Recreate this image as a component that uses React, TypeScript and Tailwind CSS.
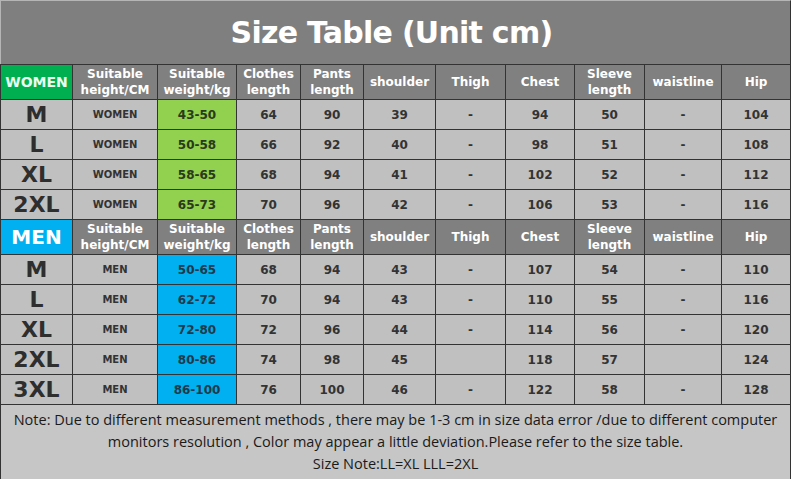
import React from "react";

const widths = [72, 85, 79, 64, 63, 72, 70, 69, 70, 77, 69];

const headers = [
  ["Suitable", "height/CM"],
  ["Suitable", "weight/kg"],
  ["Clothes", "length"],
  ["Pants", "length"],
  ["shoulder"],
  ["Thigh"],
  ["Chest"],
  ["Sleeve", "length"],
  ["waistline"],
  ["Hip"],
];

const women = [
  { size: "M", w: "43-50", v: ["64", "90", "39", "-", "94", "50", "-", "104"] },
  { size: "L", w: "50-58", v: ["66", "92", "40", "-", "98", "51", "-", "108"] },
  { size: "XL", w: "58-65", v: ["68", "94", "41", "-", "102", "52", "-", "112"] },
  { size: "2XL", w: "65-73", v: ["70", "96", "42", "-", "106", "53", "-", "116"] },
];

const men = [
  { size: "M", w: "50-65", v: ["68", "94", "43", "-", "107", "54", "-", "110"] },
  { size: "L", w: "62-72", v: ["70", "94", "43", "-", "110", "55", "-", "116"] },
  { size: "XL", w: "72-80", v: ["72", "96", "44", "-", "114", "56", "-", "120"] },
  { size: "2XL", w: "80-86", v: ["74", "98", "45", "", "118", "57", "", "124"] },
  { size: "3XL", w: "86-100", v: ["76", "100", "46", "-", "122", "58", "-", "128"] },
];

function HeaderRow({ label, color }: { label: string; color: "women" | "men" }) {
  return (
    <tr className="h-[35px]">
      <td
        className={
          color === "women"
            ? "border border-[#333] bg-[#00b050] text-center text-[14px] font-bold text-[#eafff0]"
            : "border border-[#333] bg-[#00b0f0] text-center text-[20px] font-bold text-white"
        }
      >
        {label}
      </td>
      {headers.map((h, i) => (
        <td
          key={i}
          className="border border-[#333] bg-[#808080] text-center text-[12px] font-bold leading-[16px] text-white"
        >
          {h.map((line, j) => (
            <div key={j}>{line}</div>
          ))}
        </td>
      ))}
    </tr>
  );
}

function DataRow({
  row,
  who,
}: {
  row: { size: string; w: string; v: string[] };
  who: "women" | "men";
}) {
  return (
    <tr className="h-[30px]">
      <td className="border border-[#333] bg-[#c0c0c0] text-center text-[22px] font-bold leading-none text-[#2e2e2e]">
        {row.size}
      </td>
      <td className="border border-[#333] bg-[#c0c0c0] text-center text-[10px] font-bold text-[#333]">
        {who === "women" ? "WOMEN" : "MEN"}
      </td>
      <td
        className={
          who === "women"
            ? "border border-[#333] bg-[#92d050] text-center text-[12px] font-bold text-[#2a3a1a]"
            : "border border-[#333] bg-[#00b0f0] text-center text-[12px] font-bold text-[#1d3a4a]"
        }
      >
        {row.w}
      </td>
      {row.v.map((val, i) => (
        <td key={i} className="border border-[#333] bg-[#c0c0c0] text-center text-[12px] font-bold text-[#333]">
          {val}
        </td>
      ))}
    </tr>
  );
}

export default function App() {
  return (
    <div className="w-[791px] h-[479px] bg-[#c3c3c3] font-['DejaVu_Sans',sans-serif]">
      <div className="w-[791px]">
        <div className="flex h-[64px] items-center justify-center border-t border-l border-r border-t-[#b5b5b5] border-l-[#b5b5b5] border-r-[#333] bg-[#7f7f7f] pr-2">
          <h1 className="text-[30px] font-bold tracking-tight text-white">Size Table (Unit cm)</h1>
        </div>
        <table className="w-[791px] table-fixed border-collapse">
          <colgroup>
            {widths.map((w, i) => (
              <col key={i} style={{ width: w }} />
            ))}
          </colgroup>
          <tbody>
            <HeaderRow label="WOMEN" color="women" />
            {women.map((r) => (
              <DataRow key={"w" + r.size} row={r} who="women" />
            ))}
            <HeaderRow label="MEN" color="men" />
            {men.map((r) => (
              <DataRow key={"m" + r.size} row={r} who="men" />
            ))}
            <tr className="h-[76px]">
              <td
                colSpan={11}
                className="border border-[#333] bg-[#c6c6c6] pb-[2px] text-center font-['Open_Sans',sans-serif] text-[14.5px] leading-[22px] text-[#1a1a1a]"
              >
                Note: Due to different measurement methods , there may be 1-3 cm in size data error /due to different computer
                <br />
                monitors resolution , Color may appear a little deviation.Please refer to the size table.
                <br />
                Size Note:LL=XL LLL=2XL
              </td>
            </tr>
          </tbody>
        </table>
      </div>
    </div>
  );
}
